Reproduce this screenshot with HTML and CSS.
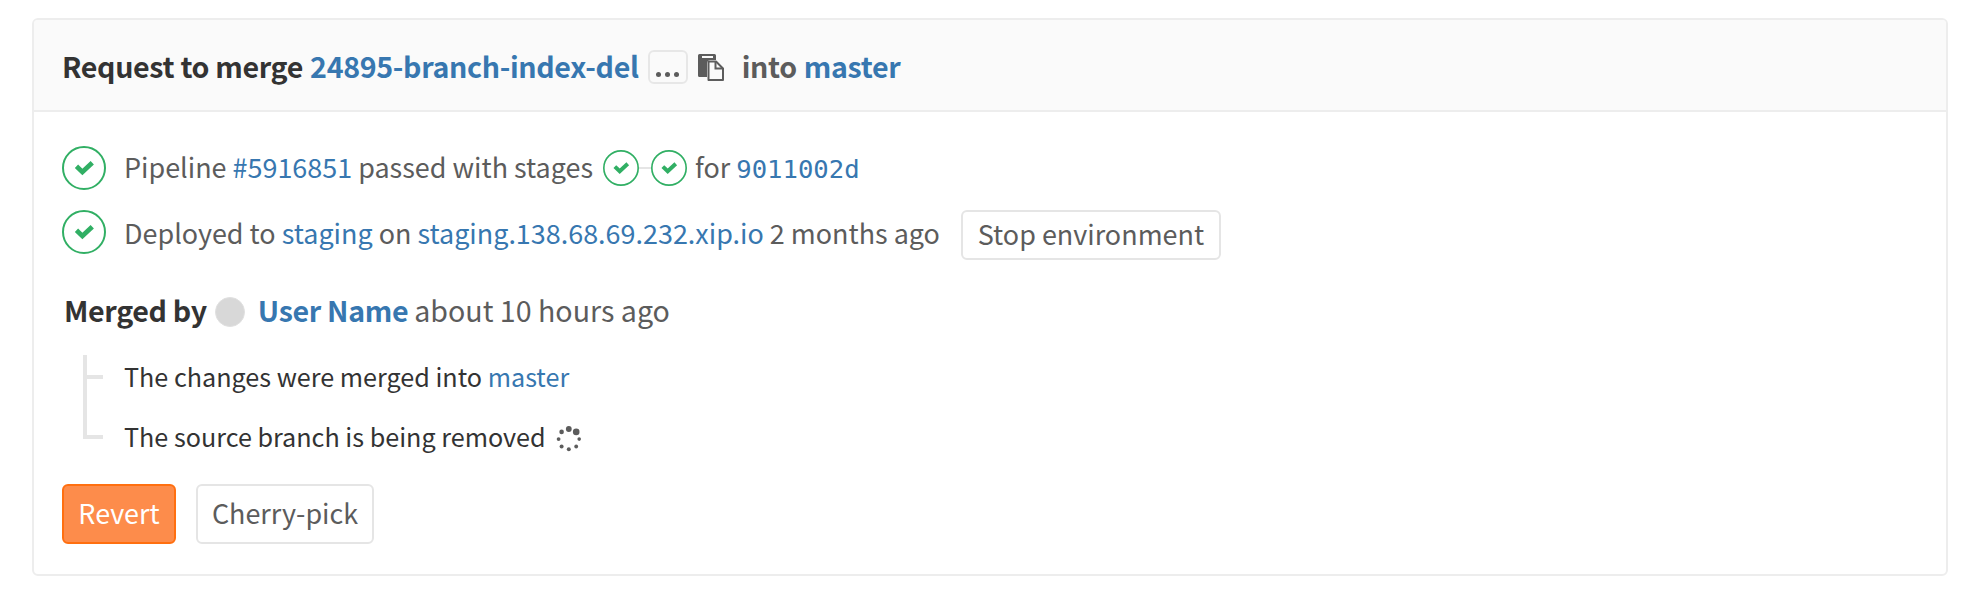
FILE: index.html
```html
<!DOCTYPE html>
<html lang="en">
<head>
<meta charset="utf-8">
<title>Merge request</title>
<link rel="stylesheet" href="styles.css">
</head>
<body>
<svg class="defs" width="0" height="0">
  <symbol id="check" viewBox="0 0 44 44">
    <circle cx="22" cy="22" r="21" fill="none" stroke="#31af64" stroke-width="2"/>
    <path d="M16.200 22 20.400 26 28.500 18.400" fill="none" stroke="#31af64" stroke-width="4.800" stroke-linecap="square" stroke-linejoin="miter"/>
  </symbol>
</svg>
<main class="card">
  <header class="card-header">
    <span class="strong dark">Request to merge</span>
    <a class="strong branch">24895-branch-index-del</a>
    <button class="expander" aria-label="Expand"><i></i><i></i><i></i></button>
    <svg class="copy" width="26" height="27" viewBox="0 0 26 27">
      <path d="M1.5 0h15A1.5 1.5 0 0 1 18 1.500V6h-5.500Q9 6 9 9.500V23H1.500A1.500 1.500 0 0 1 0 21.500V1.500A1.500 1.500 0 0 1 1.500 0z" fill="#5c5c5c"/>
      <path d="M4 2h11v2H4z" fill="#fafafa"/>
      <path d="M10.500 7.500h7.500l7 7V26H10.500z" fill="#fafafa" stroke="#5c5c5c" stroke-width="2" stroke-linejoin="round"/>
      <path d="M17.500 7.500V14.500H25" fill="none" stroke="#5c5c5c" stroke-width="2"/>
    </svg>
    <span class="strong into">into</span>
    <a class="strong target">master</a>
  </header>
  <section class="card-body">
    <div class="row pipeline">
      <svg class="status"><use href="#check"/></svg>
      <span class="text">Pipeline <a>#5916851</a> passed with stages</span>
      <span class="stages">
        <svg class="stage"><use href="#check"/></svg><i class="link-line"></i><svg class="stage"><use href="#check"/></svg>
      </span>
      <span class="text for">for</span>
      <a class="sha">9011002d</a>
    </div>
    <div class="row deploy">
      <svg class="status"><use href="#check"/></svg>
      <span class="text">Deployed to <a>staging</a> on <a>staging.138.68.69.232.xip.io</a> 2 months ago</span>
      <button class="btn stop">Stop environment</button>
    </div>
    <div class="row merged">
      <span class="strong dark">Merged by</span>
      <span class="avatar"></span>
      <a class="strong">User Name</a>
      <span class="ago">about 10 hours ago</span>
    </div>
    <ul class="notes">
      <li><span>The changes were merged into <a>master</a></span></li>
      <li><span>The source branch is being removed</span>
        <svg class="spinner" width="26" height="26" viewBox="0 0 26 26" fill="#5c5c5c">
          <circle cx="12.800" cy="3" r="2.900"/><circle cx="20.200" cy="5.900" r="3.300"/><circle cx="23.200" cy="13.100" r="1.800"/><circle cx="20.200" cy="20.500" r="1.900"/><circle cx="12.800" cy="23.300" r="2"/><circle cx="5.600" cy="20.500" r="2"/><circle cx="2.600" cy="13.100" r="1.900"/><circle cx="5.600" cy="5.900" r="2.300"/>
        </svg>
      </li>
    </ul>
    <div class="actions">
      <button class="btn revert">Revert</button>
      <button class="btn pick">Cherry-pick</button>
    </div>
  </section>
</main>
</body>
</html>
```

FILE: styles.css
```css
* { box-sizing: border-box; }
body {
  margin: 0;
  padding: 18px 26px 18px 32px;
  background: #fff;
  color: #5c5c5c;
  font-family: "Source Sans Pro", "Noto Sans CJK SC", "Open Sans", sans-serif;
  font-size: 26.95px;
  line-height: 40px;
}
.defs { position: absolute; }
a { color: #3777b0; text-decoration: none; }
.card {
  height: 558px;
  border: 2px solid #ededed;
  border-radius: 6px;
  overflow: hidden;
}
.card-header {
  display: flex;
  align-items: center;
  height: 92px;
  padding: 3px 0 0 28px;
  border-bottom: 2px solid #ededed;
  background: #fafafa;
  font-size: 28.6px;
  white-space: nowrap;
}
.strong { font-weight: 600; letter-spacing: -0.33px; }
.card-header .strong { padding-bottom: 1px; }
.dark { color: #333; }
.branch { margin-left: 7px; }
.expander {
  display: flex;
  align-items: flex-end;
  justify-content: center;
  gap: 4px;
  width: 40px;
  height: 34px;
  margin-left: 9px;
  padding: 0 0 5px;
  border: 2px solid #e7e7e7;
  border-radius: 6px;
  background: #fafafa;
}
.expander i { width: 5px; height: 5px; border-radius: 50%; background: #5c5c5c; }
.copy { margin: 2px 0 0 10px; }
.into { margin-left: 18px; }
.target { margin-left: 7px; }
.card-body { padding: 34px 28px 0; }
.row { display: flex; align-items: center; white-space: nowrap; }
.status { width: 44px; height: 44px; margin-right: 18px; flex: none; }
.pipeline { height: 44px; }
.pipeline .text { padding-bottom: 2px; }
.stages { display: flex; align-items: center; margin-left: 10px; }
.stage { width: 36px; height: 36px; }
.link-line { width: 12px; height: 2px; background: #e5e5e5; }
.for { margin-left: 8px; }
.sha {
  margin-left: 6px;
  padding-top: 1px;
  font-family: "DejaVu Sans Mono", monospace;
  font-size: 25.6px;
}
.deploy { height: 50px; margin-top: 20px; align-items: flex-start; }
.deploy .text { margin-top: 3px; }
.btn {
  border: 2px solid #e5e5e5;
  border-radius: 6px;
  padding: 0 0 2px;
  background: #fff;
  color: #5c5c5c;
  font: inherit;
}
.stop { width: 260px; height: 50px; margin-left: 21px; padding-bottom: 3px; }
.merged { height: 40px; margin-top: 32px; padding-left: 2px; font-size: 28.6px; }
.merged .strong, .ago { padding-bottom: 4px; }
.avatar {
  width: 30px;
  height: 30px;
  margin: 0 13px 0 8px;
  border-radius: 50%;
  border: 1px solid #e0e0e0;
  background: #d8d8d8;
}
.ago { margin-left: 6px; }
.notes {
  list-style: none;
  width: 800px;
  height: 84px;
  margin: 23px 0 0 21px;
  padding: 0;
  border-left: 4px solid #e5e5e5;
  color: #333;
  font-size: 25.17px;
}
.notes li { display: flex; align-items: center; height: 44px; white-space: nowrap; }
.notes li + li { height: 76px; }
.notes li::before { content: ""; width: 16px; height: 4px; margin-right: 21px; background: #e5e5e5; }
.notes span { padding-bottom: 3px; }
.spinner { margin: 3px 0 0 10px; }
.actions { display: flex; gap: 20px; margin-top: 45px; }
.actions .btn { height: 60px; }
.revert { width: 114px; border-color: #ff6f10; background: #fd8c4b; color: #fff; }
.pick { width: 178px; }
```
